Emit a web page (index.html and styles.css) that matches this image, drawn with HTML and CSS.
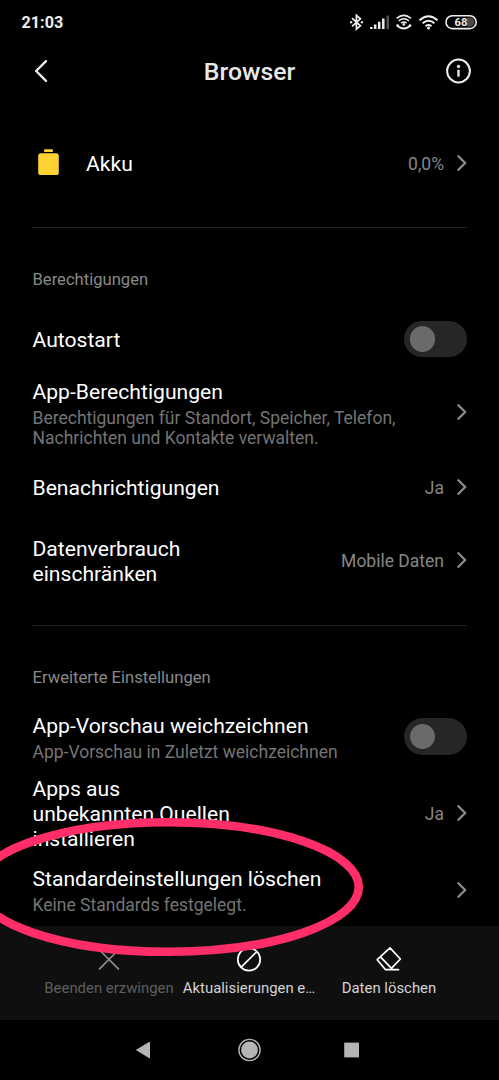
FILE: index.html
```html
<!DOCTYPE html>
<html lang="de">
<head>
<meta charset="utf-8">
<title>Browser</title>
<link rel="stylesheet" href="styles.css">
</head>
<body>
<svg class="defs" width="0" height="0"><symbol id="chev" viewBox="0 0 10 16"><path d="M1.4 1.2 8.2 8 1.4 14.8" fill="none" stroke="currentColor" stroke-width="2.3" stroke-linecap="round" stroke-linejoin="round"/></symbol></svg>
<div class="screen">
  <div class="status">
    <span class="time">21:03</span>
    <svg class="status-icons" width="130" height="20" viewBox="348 12 130 20" fill="none" stroke="#eee">
      <path d="M352 18.2 360.4 25.8 356.4 29.2V15.4L360.4 18.8 352 26.4" stroke-width="1.7"/>
      <path d="M350 22.3h2.2M360.8 22.3h2.2" stroke-width="2"/>
      <path d="M371.3 29v-2M375.2 29v-4.5M379.2 29v-7.2M383.3 29v-10.5" stroke-width="2.5"/>
      <path d="M387.7 29V15.5" stroke="#555" stroke-width="2.4"/>
      <path d="M396.6 18.4q7.2-6 14.4 0M398.7 20.9q5.1-4.2 10.2 0M401 23.2q2.8-2.2 5.6 0" stroke-width="1.5"/>
      <path d="M397.6 26q6.2 5 12.4 0" stroke-width="2"/>
      <circle cx="403.8" cy="24.4" r="1.3" fill="#eee" stroke="none"/><circle cx="397.6" cy="25.6" r="1.4" fill="#eee" stroke="none"/><circle cx="410" cy="25.6" r="1.4" fill="#eee" stroke="none"/>
      <path d="M419.5 20.2q9-8 18 0M422.6 23.3q5.9-5 11.8 0M425.5 26.2q3-2.4 6 0" stroke-width="2"/>
      <circle cx="428.5" cy="28" r="1.5" fill="#eee" stroke="none"/>
      <path d="M467 17.5h3a4.6 4.6 0 0 1 0 9.2H467z" fill="#484848" stroke="none"/>
      <rect x="446" y="15.8" width="30.2" height="12.8" rx="6.4" stroke-width="1.6"/>
      <text class="level" x="461" y="26.2" text-anchor="middle">68</text>
    </svg>
  </div>
  <header class="header">
    <svg class="back" width="14" height="24" viewBox="0 0 14 24"><path d="M12 2.2 2.1 12 12 21.8" fill="none" stroke="#eee" stroke-width="2.4" stroke-linecap="round" stroke-linejoin="round"/></svg>
    <h1>Browser</h1>
    <svg width="26" height="26" viewBox="0 0 26 26" fill="none" stroke="#eee"><circle cx="12.5" cy="13" r="11.4" stroke-width="2"/><path d="M12.5 11.7v7" stroke-width="2.3"/><circle cx="12.5" cy="8.4" r="1.6" fill="#eee" stroke="none"/></svg>
  </header>
  <main class="content">
    <div class="row battery">
      <svg class="bat" width="21" height="27" viewBox="0 0 21 27" fill="#ffd234"><rect x="6" y=".3" width="9" height="2.8" rx="1"/><rect x="0.2" y="4.2" width="20.6" height="21.8" rx="2.6"/></svg>
      <div class="text"><div class="title">Akku</div></div>
      <span class="value">0,0%</span><svg class="chev"><use href="#chev"/></svg>
    </div>
    <section>
      <h2>Berechtigungen</h2>
      <div class="row"><div class="text"><div class="title">Autostart</div></div><span class="toggle"></span></div>
      <div class="row tall raised"><div class="text"><div class="title">App-Berechtigungen</div><div class="sub">Berechtigungen für Standort, Speicher, Telefon,<br>Nachrichten und Kontakte verwalten.</div></div><svg class="chev"><use href="#chev"/></svg></div>
      <div class="row"><div class="text"><div class="title">Benachrichtigungen</div></div><span class="value">Ja</span><svg class="chev"><use href="#chev"/></svg></div>
      <div class="row tall raised"><div class="text"><div class="title">Datenverbrauch<br>einschränken</div></div><span class="value">Mobile Daten</span><svg class="chev"><use href="#chev"/></svg></div>
    </section>
    <section>
      <h2>Erweiterte Einstellungen</h2>
      <div class="row raised"><div class="text"><div class="title">App-Vorschau weichzeichnen</div><div class="sub">App-Vorschau in Zuletzt weichzeichnen</div></div><span class="toggle"></span></div>
      <div class="row triple"><div class="text"><div class="title">Apps aus<br>unbekannten Quellen<br>installieren</div></div><span class="value">Ja</span><svg class="chev"><use href="#chev"/></svg></div>
      <div class="row last raised"><div class="text"><div class="title">Standardeinstellungen löschen</div><div class="sub">Keine Standards festgelegt.</div></div><svg class="chev"><use href="#chev"/></svg></div>
    </section>
  </main>
  <footer class="actions">
    <div class="action disabled"><svg width="26" height="26" viewBox="0 0 26 26" fill="none" stroke="currentColor" stroke-width="1.7" stroke-linecap="round"><path d="M3.5 4 22.4 22.9M22.4 4 3.5 22.9"/></svg><span>Beenden erzwingen</span></div>
    <div class="action"><svg width="26" height="26" viewBox="0 0 26 26" fill="none" stroke="#fff" stroke-width="1.7"><circle cx="13" cy="13.4" r="11.2"/><path d="M5.2 21.2 20.8 5.6"/></svg><span>Aktualisierungen e…</span></div>
    <div class="action"><svg width="26" height="26" viewBox="0 0 26 26" fill="none" stroke="#fff" stroke-width="1.7" stroke-linejoin="round" stroke-linecap="round"><path d="M14 1.8 24.4 13 14.2 23.7H9.6L1.2 13.7ZM4.4 10.8 15.5 22.4M9.6 23.7H22.5"/></svg><span>Daten löschen</span></div>
  </footer>
  <nav class="nav">
    <svg width="24" height="24" viewBox="0 0 24 24" fill="#b5b5b5"><path d="M4.8 12 18.4 3.8Q19 3.6 19 4.2V19.8Q19 20.4 18.4 20.2Z"/></svg>
    <svg width="24" height="24" viewBox="0 0 24 24" fill="#b5b5b5"><circle cx="11.5" cy="12" r="10.6" fill="none" stroke="#b5b5b5" stroke-width="1.4"/><circle cx="11.5" cy="12" r="8.4"/></svg>
    <svg width="24" height="24" viewBox="0 0 24 24" fill="#b5b5b5"><rect x="4.2" y="4.6" width="14.8" height="14.8"/></svg>
  </nav>
  <svg class="marker" width="499" height="160" viewBox="0 807 499 160"><ellipse cx="168" cy="887" rx="190.8" ry="64.8" fill="none" stroke="#ff2d68" stroke-width="8.6"/></svg>
</div>
</body>
</html>
```
FILE: styles.css
```css
* { box-sizing: border-box; }
body { margin: 0; background: #000; font-family: Roboto, sans-serif; color: #fff; }
svg { display: block; flex: none; }
.defs { position: absolute; }
.screen { position: relative; width: 499px; height: 1080px; overflow: hidden; display: flex; flex-direction: column; background: #000; }
.status { height: 44px; padding: 0 21px 0 21.5px; display: flex; align-items: center; justify-content: space-between; }
.time { font-size: 16.2px; font-weight: 700; color: #eee; line-height: 20px; padding-top: 2px; }
.level { font-size: 11.2px; font-weight: 700; fill: #eee; stroke: none; }
.header { height: 54px; padding: 0 27.5px 0 33.5px; display: flex; align-items: center; justify-content: space-between; }
.header h1 { margin: 0; padding: 2px 0 0 6px; font-size: 24.8px; font-weight: 500; line-height: 30px; color: #e8e8e8; }
.content { height: 828px; padding: 0 32px; }
.row { height: 61px; display: flex; align-items: center; }
.tall { height: 87px; }
.triple { height: 94px; padding-bottom: 3px; }
.last { height: 58px; }
.battery { height: 129px; padding: 32px 0 30px 6px; }
.bat { margin: -2px 26.5px 0 0; }
.text { flex: 1; white-space: nowrap; padding-left: 0.5px; }
.title { font-size: 21.12px; line-height: 25px; }
.sub { margin: 4px 0 -1px; font-size: 17.5px; line-height: 20px; color: #747474; }
.raised { padding-bottom: 2px; }
.raised .chev { margin-top: -1px; }
.raised .toggle { margin-top: 0; }
.value { font-size: 17.5px; line-height: 20px; color: #868686; margin-right: 13px; }
.chev { width: 10px; height: 16px; color: #8c8c8c; margin-top: -2px; }
section { border-top: 1px solid #202020; }
section + section { margin-top: 20px; }
h2 { margin: 0; height: 81px; padding: 42px 0 0 0.5px; font-size: 16.6px; line-height: 20px; font-weight: 400; color: #898989; }
.toggle { width: 62.5px; height: 36.5px; padding: 5.5px; border-radius: 19px; background: #262626; margin: -1.5px 0.5px 0 0; }
.toggle::before { content: ""; display: block; width: 25.5px; height: 25.5px; border-radius: 50%; background: #6a6a6a; }
.actions { height: 94px; padding: 20px 39.5px 0 38.5px; display: grid; grid-template-columns: repeat(3, 140px); background: #0f0f0f; justify-content: center; }
.action { display: flex; flex-direction: column; align-items: center; gap: 7px; font-size: 14.9px; line-height: 18px; color: #d4d4d4; white-space: nowrap; }
.disabled { color: #8d8d8d; }
.disabled span { color: #5e5e5e; }
.nav { height: 60px; padding: 0 131px 0 131px; display: grid; grid-template-columns: 24px 24px 24px; justify-content: space-between; align-items: center; }
.nav svg:last-child { margin-left: -4px; }
.marker { position: absolute; left: 0; top: 807px; }
```
